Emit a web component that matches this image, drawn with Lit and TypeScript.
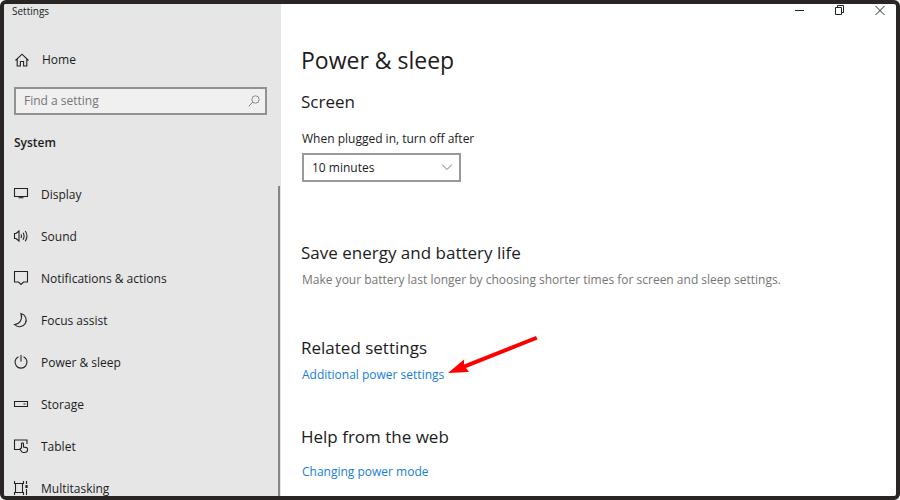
import { LitElement, html, css, svg } from "lit";
import { customElement, property } from "lit/decorators.js";

const icons: Record<string, unknown> = {
  home: svg`<path d="M1.500 8.500 8 2.200l6.500 6.300M3.200 7V14h3.200V9.500h3.200V14h3.200V7"/>`,
  display: svg`<path d="M1.500 2.500h13v8h-13zM8 10.500v1.500M5.500 11.800h5"/>`,
  sound: svg`<path d="M1.500 5.500v5H3L6 13V3L3 5.500zM8 6.500q1 1.700 0 3.500M10 4.800q2.200 3.400 0 6.900M12.200 3q3.600 5 0 10.200"/>`,
  notifications: svg`<path d="M1.500 1.500h13v10.500h-4L8 14.500 5.500 12h-4z"/>`,
  focus: svg`<path d="M8 1.500a6.700 6.700 0 1 1-6.500 11C6.500 12.300 9.800 7.500 8 1.500z"/>`,
  power: svg`<path d="M8 1v6.500M5.500 2.700a6 6 0 1 0 5 0"/>`,
  storage: svg`<path d="M1.500 5.500h13v5h-13zM10.500 8h2"/>`,
  tablet: svg`<path d="M7 11.500H1.500v-9.500h12.500V6M8.500 10.500V5.500q1-1.200 2 0V9l3 .6q1 .4 1 1.400v1q0 2.500-3 2.500h-1.200q-1.300 0-2-1.200L7 11q.6-1.300 1.500-.5"/>`,
  multitasking: svg`<path d="M1.500 1v2.500h9V1M2.500 3.500v9M9.500 3.500v9M1.500 15v-2.500h9V15M13.500 1v3M13.500 9v6"/><path d="M13.500 5v3" stroke-width="2.200"/>`,
};

@customElement("line-icon")
export class LineIcon extends LitElement {
  @property() name = "home";

  static styles = css`
    :host { display: block; flex: none; width: 16px; height: 16px; }
    .glyph { display: block; fill: none; stroke: #222; stroke-width: 1.1; }
  `;

  render() {
    return html`<svg class="glyph" width="16" height="16" viewBox="0 0 16 16" aria-hidden="true">${icons[this.name]}</svg>`;
  }
}

const sections = [
  ["display", "Display"],
  ["sound", "Sound"],
  ["notifications", "Notifications & actions"],
  ["focus", "Focus assist"],
  ["power", "Power & sleep"],
  ["storage", "Storage"],
  ["tablet", "Tablet"],
  ["multitasking", "Multitasking"],
];

@customElement("app-root")
export class AppRoot extends LitElement {
  static styles = css`
    :host { display: block; background: #fff; }
    * { box-sizing: border-box; }
    .window {
      display: flex;
      height: 100vh;
      overflow: hidden;
      border: 4px solid #292525;
      border-radius: 6px;
      background: #fff;
      color: #1c1c1c;
      font: 12px/16px "Open Sans", "Noto Sans", sans-serif;
    }
    .sidebar {
      display: flex;
      flex-direction: column;
      flex: none;
      width: 277px;
      background: #e6e6e6;
    }
    .title { padding-left: 8px; font-size: 10px; line-height: 14px; }
    .home {
      display: flex;
      align-items: center;
      gap: 12px;
      margin-top: 34px;
      padding-left: 10px;
      color: inherit;
      text-decoration: none;
    }
    .search {
      display: flex;
      align-items: center;
      height: 28px;
      margin: 19px 14px 0 10px;
      padding: 0 5px 0 8px;
      border: 2px solid #919191;
      background: #f0f0f0;
    }
    .query {
      flex: 1;
      min-width: 0;
      padding: 0;
      border: 0;
      outline: 0;
      background: none;
      color: #1c1c1c;
      font: inherit;
    }
    .query::placeholder { color: #757575; opacity: 1; }
    .lens { fill: none; stroke: #888; }
    .group { margin: 20px 0 0 10px; font-size: 12px; line-height: 16px; font-weight: 600; }
    .scroller { display: flex; flex: 1; min-height: 0; margin-top: 23px; overflow: hidden; }
    .list { flex: 1; margin: 0; padding: 0; list-style: none; }
    .item {
      display: flex;
      align-items: center;
      gap: 12px;
      height: 42px;
      padding-left: 9px;
      color: inherit;
      text-decoration: none;
    }
    .item line-icon { margin-bottom: 2px; }
    .thumb { width: 2px; margin: 12px 1px 0 0; background: #858585; }
    .main { flex: 1; min-width: 0; }
    .controls { display: flex; justify-content: flex-end; gap: 24px; padding-right: 8px; }
    .control { width: 16px; height: 14px; padding: 0; border: 0; background: none; }
    .shape { display: block; fill: none; stroke: #222; }
    .content { padding: 26px 20px 0; }
    h1, h2, p { margin: 0; }
    h1 { font-size: 23px; line-height: 32px; font-weight: 400; }
    h2 { font-size: 17px; line-height: 24px; font-weight: 400; }
    .screen { margin-top: 14px; }
    .label { display: block; margin: 17px 0 6px 1px; }
    .picker { position: relative; width: 159px; margin-left: 1px; }
    .choice {
      display: block;
      width: 100%;
      height: 29px;
      padding: 0 8px;
      border: 2px solid #999;
      border-radius: 0;
      appearance: none;
      background: #fff;
      color: inherit;
      font: inherit;
    }
    .chevron { position: absolute; top: 10px; right: 8px; fill: none; stroke: #777; pointer-events: none; }
    .energy { margin-top: 59px; }
    .note { margin: 7px 0 0 1px; color: #767676; }
    .related { margin-top: 48px; }
    .row { display: flex; margin: 7px 0 0 1px; }
    .link { position: relative; color: #1580d8; text-decoration: none; }
    .arrow { position: absolute; left: 100%; bottom: 1px; margin-left: 2px; }
    .help { margin-top: 42px; }
    .help + .row { margin-top: 15px; }
  `;

  render() {
    return html`
      <div class="window">
        <aside class="sidebar">
          <div class="title">Settings</div>
          <a class="home" href="#home"><line-icon name="home"></line-icon>Home</a>
          <div class="search">
            <input class="query" type="text" placeholder="Find a setting" aria-label="Find a setting" />
            <svg class="lens" width="12" height="12" viewBox="0 0 12 12" aria-hidden="true">
              <circle cx="7.500" cy="4.500" r="3.700" /><path d="M4.800 7.200.8 11.200" />
            </svg>
          </div>
          <h2 class="group">System</h2>
          <div class="scroller">
            <ul class="list">
              ${sections.map(
                ([icon, label]) => html`<li><a class="item" href="#${icon}"><line-icon name=${icon}></line-icon>${label}</a></li>`
              )}
            </ul>
            <div class="thumb"></div>
          </div>
        </aside>
        <main class="main">
          <div class="controls">
            <button class="control" aria-label="Minimize">
              <svg class="shape" width="16" height="14" viewBox="0 0 16 14"><path d="M3 6.500h9" /></svg>
            </button>
            <button class="control" aria-label="Restore">
              <svg class="shape" width="16" height="14" viewBox="0 0 16 14"><path d="M3.500 3.500h6v7h-6zM5.500 3.500v-2h6v7h-2" /></svg>
            </button>
            <button class="control" aria-label="Close">
              <svg class="shape" width="16" height="14" viewBox="0 0 16 14"><path d="m3.500 2 9 9M12.500 2l-9 9" /></svg>
            </button>
          </div>
          <div class="content">
            <h1>Power &amp; sleep</h1>
            <h2 class="screen">Screen</h2>
            <label class="label" for="timeout">When plugged in, turn off after</label>
            <div class="picker">
              <select class="choice" id="timeout"><option>10 minutes</option></select>
              <svg class="chevron" width="12" height="8" viewBox="0 0 12 8" aria-hidden="true"><path d="m1 1.500 5 5 5-5" /></svg>
            </div>
            <h2 class="energy">Save energy and battery life</h2>
            <p class="note">Make your battery last longer by choosing shorter times for screen and sleep settings.</p>
            <h2 class="related">Related settings</h2>
            <div class="row">
              <a class="link" href="#additional">Additional power settings<svg class="arrow" width="94" height="46" viewBox="0 0 94 46" aria-hidden="true">
                <path d="M2 37 18 23.500 18 28.500 90 0 91.500 3.500 20 32 23 36z" fill="#fe0000" />
              </svg></a>
            </div>
            <h2 class="help">Help from the web</h2>
            <div class="row"><a class="link" href="#power-mode">Changing power mode</a></div>
          </div>
        </main>
      </div>
    `;
  }
}
